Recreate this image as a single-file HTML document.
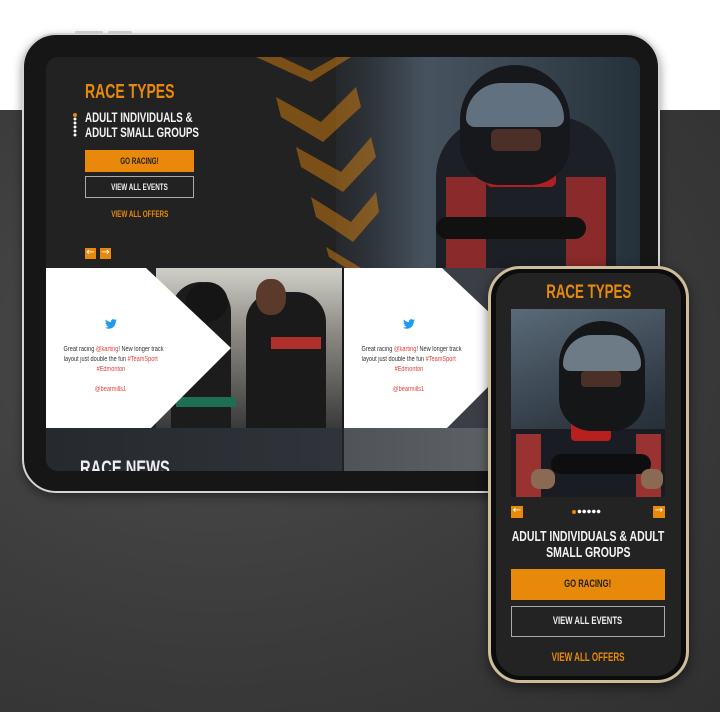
<!DOCTYPE html>
<html><head><meta charset="utf-8"><style>
*{margin:0;padding:0;box-sizing:border-box}
body{width:720px;height:712px;overflow:hidden;position:relative;background:#fff;font-family:"Liberation Sans",sans-serif}
.abs{position:absolute}
.bg{left:0;top:110px;width:720px;height:602px;background:radial-gradient(ellipse at 30% 40%,#4c4c4c,#3a3a3a 60%,#303030);}
.t{font-weight:bold;text-transform:uppercase;white-space:nowrap}
.n{display:inline-block;transform:scaleX(.7);transform-origin:left center}
.c{display:inline-block;transform:scaleX(.7);transform-origin:center center}
.or{color:#e8890c}
.arr{width:11px;height:11px;background:#e8890c;color:#fff;font-size:10px;line-height:10px;text-align:center;font-family:"DejaVu Sans",sans-serif}
.tw{font-size:7px;color:#333;text-align:center;line-height:10px;}
.tw .c{transform:scaleX(.8);white-space:nowrap}
.r{color:#e0443a}
</style></head><body>
<div class="abs bg"></div>
<div class="abs" style="left:22px;top:33px;width:638px;height:460px;background:#161616;border-radius:34px;border:2px solid #d4d4d4;box-shadow:0 4px 10px rgba(0,0,0,.4)"></div>
<div class="abs" style="left:75px;top:31px;width:28px;height:3px;background:#ccc;border-radius:2px"></div>
<div class="abs" style="left:108px;top:31px;width:24px;height:3px;background:#ccc;border-radius:2px"></div>
<div class="abs" style="left:46px;top:57px;width:594px;height:414px;background:#222;border-radius:12px;overflow:hidden">
  <div class="abs" style="left:290px;top:0;width:304px;height:211px;background:linear-gradient(90deg,#2a3038,#46525e 30%,#3a4650 60%,#24303a);"></div>
  <div class="abs" style="left:230px;top:0;width:140px;height:211px;background:linear-gradient(90deg,#222,rgba(34,34,34,0));"></div>
  <div class="abs" style="left:390px;top:60px;width:180px;height:151px;background:#1d1f26;border-radius:60px 60px 0 0"></div>
  <div class="abs" style="left:400px;top:120px;width:40px;height:91px;background:#8a2a2a"></div>
  <div class="abs" style="left:520px;top:120px;width:40px;height:91px;background:#8a2a2a"></div>
  <div class="abs" style="left:440px;top:100px;width:70px;height:30px;background:#b02020;border-radius:6px"></div>
  <div class="abs" style="left:390px;top:160px;width:150px;height:22px;background:#111;border-radius:12px"></div>
  <div class="abs" style="left:414px;top:8px;width:110px;height:120px;background:#16181c;border-radius:55px 55px 40px 40px"></div>
  <div class="abs" style="left:420px;top:26px;width:98px;height:44px;background:#6f8190;border-radius:40px 40px 10px 10px;opacity:.85"></div>
  <div class="abs" style="left:445px;top:72px;width:50px;height:22px;background:#4a3026;border-radius:6px"></div>
  <svg class="abs" style="left:205px;top:0" width="130" height="211"><g fill="#e8890c" opacity=".45">
  <polygon points="5,0 60,25 100,0 85,0 60,14 30,0"/>
  <polygon points="25,40 70,65 105,30 110,50 72,85 30,60"/>
  <polygon points="45,90 90,115 120,80 125,100 92,135 50,110"/>
  <polygon points="60,140 100,165 125,135 128,155 102,185 65,160"/>
  <polygon points="75,190 110,211 95,211 78,200"/></g></svg>
  <div class="abs t or" style="left:39px;top:24px;font-size:20px"><span class="n">Race Types</span></div>
  <div class="abs" style="left:27px;top:56px;width:4px;height:24px;background:radial-gradient(circle,#fff 1.3px,transparent 1.6px) 0 0/4px 4px"></div>
  <div class="abs" style="left:27px;top:56px;width:4px;height:4px;border-radius:50%;background:#e8890c"></div>
  <div class="abs t" style="left:39px;top:53px;font-size:14px;line-height:15px;color:#f2f2f2"><span class="n">Adult Individuals &amp;<br>Adult Small Groups</span></div>
  <div class="abs t" style="left:39px;top:93px;width:109px;height:22px;background:#e8890c;color:#222;font-size:9px;text-align:center;line-height:22px"><span class="c">Go Racing!</span></div>
  <div class="abs t" style="left:39px;top:119px;width:109px;height:22px;border:1px solid #aaa;color:#eee;font-size:9px;text-align:center;line-height:20px"><span class="c">View All Events</span></div>
  <div class="abs t or" style="left:39px;top:152px;width:109px;font-size:9px;text-align:center"><span class="c">View All Offers</span></div>
  <div class="abs arr" style="left:39px;top:191px">←</div>
  <div class="abs arr" style="left:54px;top:191px">→</div>
  <div class="abs" style="left:0;top:211px;width:594px;height:160px;background:#222"></div>
  <div class="abs" style="left:110px;top:211px;width:186px;height:160px;background:linear-gradient(180deg,#cfcfc8,#8d8a84 40%,#3a3a3a)"></div>
  <div class="abs" style="left:125px;top:225px;width:60px;height:146px;background:#1c1c1c;border-radius:30px 30px 0 0"></div>
  <div class="abs" style="left:200px;top:235px;width:80px;height:136px;background:#1a1a1a;border-radius:30px 30px 0 0"></div>
  <div class="abs" style="left:140px;top:225px;width:42px;height:40px;background:#151515;border-radius:50%"></div>
  <div class="abs" style="left:210px;top:222px;width:30px;height:36px;background:#5a3a2a;border-radius:45%"></div>
  <div class="abs" style="left:225px;top:280px;width:50px;height:12px;background:#b0302c"></div>
  <div class="abs" style="left:130px;top:340px;width:60px;height:10px;background:#1e6e55"></div>
  <svg class="abs" style="left:0;top:211px" width="200" height="160"><polygon points="0,0 100,0 185,80 105,160 0,160" fill="#fff"/></svg>
  <svg class="abs" style="left:296px;top:211px" width="298" height="160"><rect width="298" height="160" fill="#3b3e44"/><polygon points="0,0 100,0 185,80 105,160 0,160" fill="#fff"/></svg>
  <div class="abs" style="left:296px;top:211px;width:2px;height:160px;background:#1a1a1a"></div>
  <svg class="abs" style="left:59px;top:262px" width="12" height="10" viewBox="0 0 24 20"><path d="M24 2.4a10 10 0 0 1-2.8.8 5 5 0 0 0 2.2-2.7 10 10 0 0 1-3.1 1.2A4.9 4.9 0 0 0 12 6.1 14 14 0 0 1 1.7.9a4.9 4.9 0 0 0 1.5 6.6A4.9 4.9 0 0 1 1 6.9a4.9 4.9 0 0 0 3.9 4.8 5 5 0 0 1-2.2.1 4.9 4.9 0 0 0 4.6 3.4A9.9 9.9 0 0 1 0 17.2 14 14 0 0 0 7.5 19.4c9 0 14-7.5 14-14v-.6A10 10 0 0 0 24 2.4z" fill="#1d9bf0"/></svg>
  <div class="abs tw" style="left:5px;top:288px;width:120px"><span class="c">Great racing <span class="r">@karting</span>! New longer track</span><br><span class="c">layout just double the fun <span class="r">#TeamSport</span></span><br><span class="c r">#Edmonton</span><br><br><span class="c r">@bearmills1</span></div>
  <svg class="abs" style="left:357px;top:262px" width="12" height="10" viewBox="0 0 24 20"><path d="M24 2.4a10 10 0 0 1-2.8.8 5 5 0 0 0 2.2-2.7 10 10 0 0 1-3.1 1.2A4.9 4.9 0 0 0 12 6.1 14 14 0 0 1 1.7.9a4.9 4.9 0 0 0 1.5 6.6A4.9 4.9 0 0 1 1 6.9a4.9 4.9 0 0 0 3.9 4.8 5 5 0 0 1-2.2.1 4.9 4.9 0 0 0 4.6 3.4A9.9 9.9 0 0 1 0 17.2 14 14 0 0 0 7.5 19.4c9 0 14-7.5 14-14v-.6A10 10 0 0 0 24 2.4z" fill="#1d9bf0"/></svg>
  <div class="abs tw" style="left:303px;top:288px;width:120px"><span class="c">Great racing <span class="r">@karting</span>! New longer track</span><br><span class="c">layout just double the fun <span class="r">#TeamSport</span></span><br><span class="c r">#Edmonton</span><br><br><span class="c r">@bearmills1</span></div>
  <div class="abs" style="left:0;top:371px;width:296px;height:43px;background:linear-gradient(90deg,#262a2e,#30343a)"></div>
  <div class="abs" style="left:298px;top:371px;width:296px;height:43px;background:linear-gradient(90deg,#505458,#6a6c70)"></div>
  <div class="abs t" style="left:34px;top:400px;font-size:21px;color:#eee"><span class="n">Race News</span></div>
</div>
<div class="abs" style="left:488px;top:266px;width:201px;height:417px;background:#0c0c0c;border-radius:32px;border:3px solid #cdbd98;box-shadow:0 4px 12px rgba(0,0,0,.5)"></div>
<div class="abs" style="left:496px;top:273px;width:185px;height:403px;background:#232323;border-radius:25px;overflow:hidden">
  <div class="abs t or" style="left:-50px;top:9px;width:285px;text-align:center;font-size:19px"><span class="c">Race Types</span></div>
  <div class="abs" style="left:15px;top:36px;width:154px;height:188px;background:linear-gradient(160deg,#5a6a78,#2c3640 60%,#1e242a);overflow:hidden">
    <div class="abs" style="left:0;top:120px;width:154px;height:68px;background:#1a1c24"></div>
    <div class="abs" style="left:5px;top:125px;width:25px;height:63px;background:#9a3232"></div>
    <div class="abs" style="left:125px;top:125px;width:25px;height:63px;background:#9a3232"></div>
    <div class="abs" style="left:60px;top:112px;width:40px;height:20px;background:#b82020;border-radius:4px"></div>
    <div class="abs" style="left:48px;top:12px;width:86px;height:110px;background:#141618;border-radius:45px 45px 34px 34px"></div>
    <div class="abs" style="left:52px;top:26px;width:78px;height:36px;background:#7d8d9a;border-radius:34px 34px 8px 8px;opacity:.85"></div>
    <div class="abs" style="left:70px;top:62px;width:40px;height:16px;background:#4a3026;border-radius:4px"></div>
    <div class="abs" style="left:40px;top:145px;width:100px;height:20px;background:#0e0e10;border-radius:10px"></div>
    <div class="abs" style="left:20px;top:160px;width:24px;height:20px;background:#8a6a52;border-radius:8px"></div>
    <div class="abs" style="left:130px;top:160px;width:22px;height:20px;background:#8a6a52;border-radius:8px"></div>
  </div>
  <div class="abs arr" style="left:15px;top:233px;width:12px;height:12px">←</div>
  <div class="abs arr" style="left:157px;top:233px;width:12px;height:12px">→</div>
  <div class="abs" style="left:76px;top:237px;width:4px;height:4px;border-radius:50%;background:#e8890c"></div>
  <div class="abs" style="left:81px;top:236px;width:24px;height:5px;background:radial-gradient(circle,#fff 1.6px,transparent 2px) 0 0/4.8px 5px"></div>
  <div class="abs t" style="left:-50px;top:256px;width:285px;text-align:center;font-size:15px;line-height:16px;color:#f2f2f2"><span class="c">Adult Individuals &amp; Adult</span><br><span class="c">Small Groups</span></div>
  <div class="abs t" style="left:15px;top:296px;width:154px;height:31px;background:#e8890c;color:#222;font-size:11px;text-align:center;line-height:31px"><span class="c">Go Racing!</span></div>
  <div class="abs t" style="left:15px;top:333px;width:154px;height:31px;border:1px solid #aaa;color:#eee;font-size:11px;text-align:center;line-height:29px"><span class="c">View All Events</span></div>
  <div class="abs t or" style="left:-50px;top:379px;width:285px;text-align:center;font-size:11.5px"><span class="c">View All Offers</span></div>
</div>
</body></html>
